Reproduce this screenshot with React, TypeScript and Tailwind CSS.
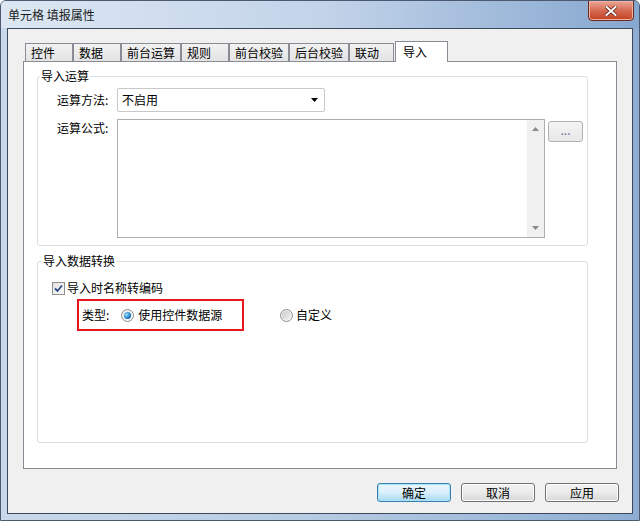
import React from 'react';

const font = { fontFamily: '"Noto Sans CJK SC", "Noto Sans", sans-serif' };

const tabs = [
  { label: '控件', w: 'w-[48px]' },
  { label: '数据', w: 'w-[48px]' },
  { label: '前台运算', w: 'w-[60px]' },
  { label: '规则', w: 'w-[48px]' },
  { label: '前台校验', w: 'w-[60px]' },
  { label: '后台校验', w: 'w-[60px]' },
  { label: '联动', w: 'w-[45px]' },
];

function Radio({ checked }: { checked?: boolean }) {
  return (
    <span className="flex h-[13px] w-[13px] items-center justify-center rounded-full border border-[#8e8f8f] bg-gradient-to-br from-[#e6e6e6] to-[#fbfbfb]">
      {checked ? (
        <span className="h-[7px] w-[7px] rounded-full bg-[radial-gradient(circle_at_35%_35%,#9fe4ff,#1a78c2_60%,#0b4c86)]" />
      ) : (
        <span className="h-[9px] w-[9px] rounded-full bg-gradient-to-br from-[#cbcbcb] to-[#f4f4f4]" />
      )}
    </span>
  );
}

function WinButton({ label, primary }: { label: string; primary?: boolean }) {
  return (
    <div
      className={
        'flex h-[19px] w-[74px] items-center justify-center rounded-[3px] border text-[12px] text-black ' +
        (primary
          ? 'border-[#3c7fb1] bg-gradient-to-b from-[#eaf6fd] via-[#d9f0fc] to-[#a7d9f5] shadow-[inset_0_0_0_1px_#a9e3fb]'
          : 'border-[#707070] bg-gradient-to-b from-[#f2f2f2] via-[#ebebeb] to-[#d6d6d6] shadow-[inset_0_0_0_1px_#fcfcfc]')
      }
    >
      {label}
    </div>
  );
}

export default function App() {
  return (
    <div
      style={font}
      className="flex h-[521px] w-[640px] flex-col overflow-hidden rounded-t-[6px] border border-[#4b5a70] bg-gradient-to-r from-[#c9d8ea] via-[#b6cbe3] to-[#8fadd3] text-[12px] leading-[16px] text-black"
    >
      {/* title bar */}
      <div className="flex h-[27px] shrink-0 items-start justify-between bg-gradient-to-r from-[#dce7f3] via-[#c3d4e9] to-[#86a7cf]">
        <div className="pl-[7px] pt-[6px] text-[12px] text-[#1b1b1b]">单元格 填报属性</div>
        <div className="mr-[5px] -mt-[1px] flex h-[21px] w-[46px] items-center justify-center rounded-b-[4px] border border-[#6b2a1e] bg-gradient-to-b from-[#e9a898] via-[#d66a52] to-[#c2401f] shadow-[inset_0_0_0_1px_#f0b3a3]">
          <svg width="12" height="10" viewBox="0 0 12 10">
            <path d="M1.5 1 L10.5 9 M10.5 1 L1.5 9" stroke="#5a1c10" strokeWidth="3.4" strokeLinecap="square" />
            <path d="M1.5 1 L10.5 9 M10.5 1 L1.5 9" stroke="#ffffff" strokeWidth="2" strokeLinecap="square" />
          </svg>
        </div>
      </div>

      {/* client area */}
      <div className="mx-[6px] flex h-[486px] shrink-0 flex-col border border-[#3e4a59] bg-[#f0f0f0]">
        {/* tab strip */}
        <div className="ml-[17px] mt-[12px] flex h-[20px] items-end">
          {tabs.map((t) => (
            <div
              key={t.label}
              className={
                t.w +
                ' flex h-[18px] items-center border border-b-0 border-[#898c95] bg-gradient-to-b from-[#f2f2f2] to-[#e3e3e3] pl-[5px] pt-[1px]'
              }
            >
              {t.label}
            </div>
          ))}
          <div className="relative z-10 -mb-[1px] ml-[1px] flex h-[21px] w-[53px] items-start border border-b-0 border-[#898c95] bg-white pl-[7px] pt-[2px]">
            导入
          </div>
        </div>

        {/* tab panel */}
        <div className="ml-[15px] flex h-[408px] w-[594px] flex-col border border-[#898c95] bg-white">
          {/* group 1 */}
          <div className="ml-[13px] mt-[14px] flex h-[170px] w-[551px] flex-col rounded-[3px] border border-[#d5dfe5]">
            <span className="-mt-[9px] ml-[2px] w-fit bg-white px-[1px]">导入运算</span>
            <div className="mt-[4px] flex items-center pl-[19px]">
              <span className="w-[60px]">运算方法:</span>
              <div className="flex h-[24px] w-[208px] items-center justify-between rounded-[2px] border border-[#c8c8c8] bg-white pl-[4px] pr-[6px]">
                <span>不启用</span>
                <svg width="7" height="4" viewBox="0 0 7 4">
                  <path d="M0 0 H7 L3.5 4 Z" fill="#000" />
                </svg>
              </div>
            </div>
            <div className="mt-[7px] flex items-start pl-[19px]">
              <span className="w-[60px] pt-[1px]">运算公式:</span>
              <div className="flex h-[119px] w-[428px] justify-end border border-[#abadb3] bg-white">
                <div className="flex w-[17px] flex-col items-center justify-between bg-[#f0f0f0] pb-[7px] pt-[7px]">
                  <svg width="7" height="4" viewBox="0 0 7 4">
                    <path d="M0 4 H7 L3.5 0 Z" fill="#8a8a8a" />
                  </svg>
                  <svg width="7" height="4" viewBox="0 0 7 4">
                    <path d="M0 0 H7 L3.5 4 Z" fill="#8a8a8a" />
                  </svg>
                </div>
              </div>
              <div className="ml-[3px] mt-[2px] flex h-[21px] w-[35px] items-center justify-center rounded-[3px] border border-[#adb2b5] bg-gradient-to-b from-[#f4f4f4] to-[#e8e8e8] pb-[4px] text-[#7a6a9a]">
                ...
              </div>
            </div>
          </div>

          {/* group 2 */}
          <div className="ml-[13px] mt-[15px] flex h-[182px] w-[551px] flex-col rounded-[3px] border border-[#d5dfe5]">
            <span className="-mt-[9px] ml-[4px] w-fit bg-white px-[1px]">导入数据转换</span>
            <div className="mt-[11px] flex items-center pl-[14px]">
              <span className="flex h-[13px] w-[13px] items-center justify-center border border-[#8e8f8f] bg-gradient-to-br from-[#e1e1e1] to-[#fbfbfb]">
                <svg width="9" height="9" viewBox="0 0 9 9">
                  <path d="M1 4.5 L3.5 7 L8 1.5" stroke="#2a4a8a" strokeWidth="1.8" fill="none" />
                </svg>
              </span>
              <span className="ml-[2px]">导入时名称转编码</span>
            </div>
            <div className="mt-[3px] flex items-center">
              <div className="ml-[39px] flex h-[32px] w-[167px] items-center border-2 border-[#e8161c] pl-[3px]">
                <span>类型:</span>
                <span className="ml-[12px]">
                  <Radio checked />
                </span>
                <span className="ml-[4px]">使用控件数据源</span>
              </div>
              <span className="ml-[36px]">
                <Radio />
              </span>
              <span className="ml-[3px]">自定义</span>
            </div>
          </div>
        </div>

        {/* buttons */}
        <div className="mr-[13px] mt-[14px] flex justify-end gap-[10px]">
          <WinButton label="确定" primary />
          <WinButton label="取消" />
          <WinButton label="应用" />
        </div>
      </div>
    </div>
  );
}
